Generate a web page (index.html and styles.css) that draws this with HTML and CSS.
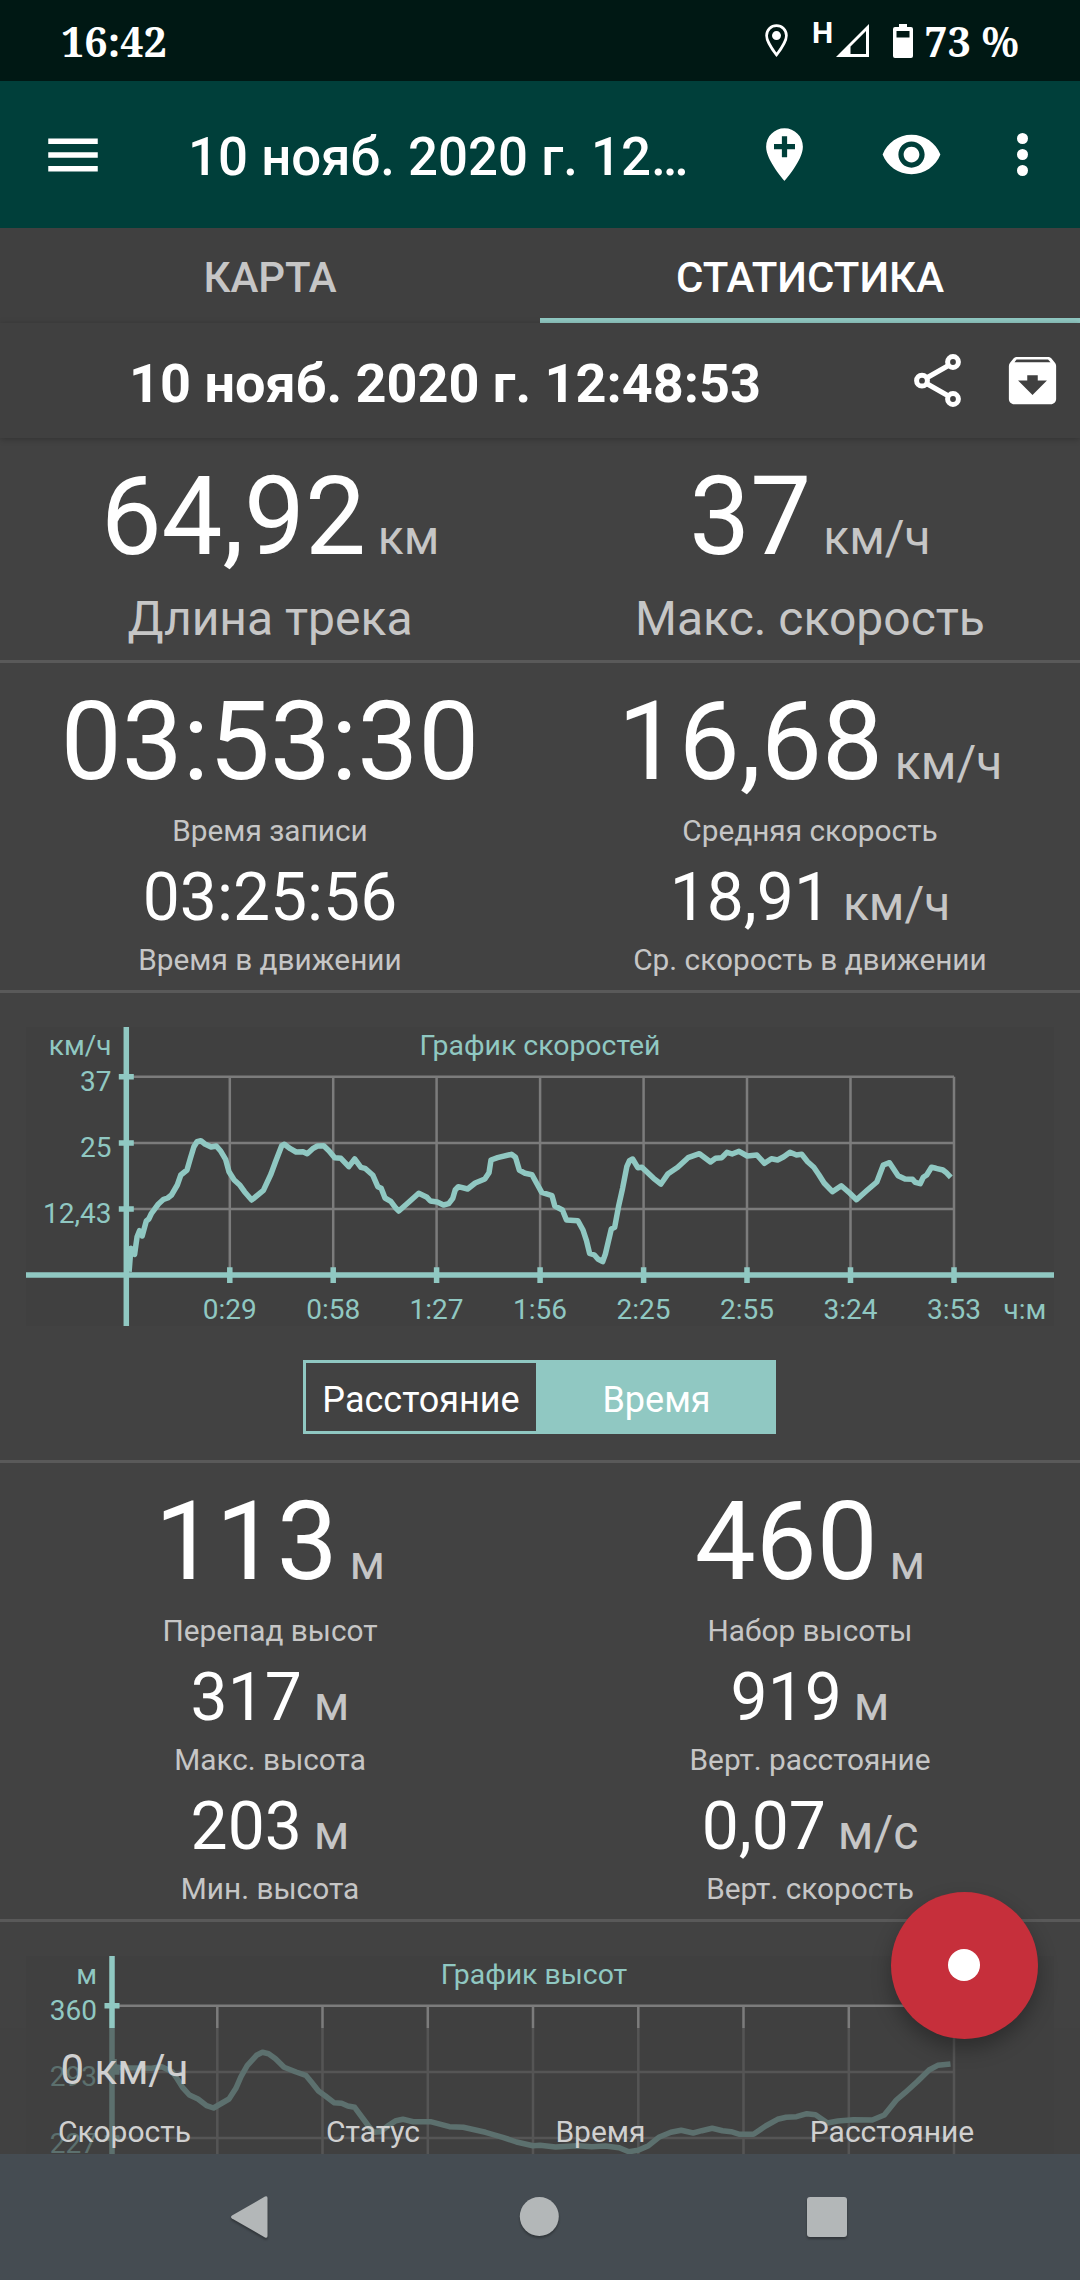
FILE: index.html
```html
<!DOCTYPE html>
<html lang="ru">
<head>
    <meta charset="UTF-8">
    <meta name="viewport" content="width=device-width, initial-scale=1.0">
    <title>Статистика трека</title>
    <link rel="stylesheet" href="styles.css">
</head>
<body>
    <div class="phone">
        <div class="statusbar">
            <span class="clock">16:42</span>
            <div class="status-icons">
                <svg class="ic-pin" viewBox="0 0 23 33"><path d="M11.5 1.6C6 1.6 1.6 6 1.6 11.5c0 7 9.900 19.300 9.900 19.300s9.900-12.300 9.900-19.300C21.400 6 17 1.600 11.500 1.600z" fill="none" stroke="#fff" stroke-width="2.700"/><circle cx="11.500" cy="11.600" r="4.500" fill="#fff"/></svg>
                <span class="net">H</span>
                <svg class="ic-signal" viewBox="0 0 33 33"><path fill-rule="evenodd" d="M33 0v33H0zM30 7L14.500 22.500V30H30z" fill="#fff"/></svg>
                <svg class="ic-battery" viewBox="0 0 20 34"><path fill-rule="evenodd" d="M6 0h8v3h4q2 0 2 2v27q0 2-2 2H2q-2 0-2-2V5q0-2 2-2h4zM3.500 7v6.500h13V7z" fill="#fff"/></svg>
                <span class="charge">73 %</span>
            </div>
        </div>

        <header class="appbar">
            <svg class="ic-menu" viewBox="0 0 24 24"><path d="M3 18h18v-2H3v2zm0-5h18v-2H3v2zm0-7v2h18V6H3z" fill="#fff"/></svg>
            <h1>10 нояб. 2020 г. 12…</h1>
            <svg class="ic-marker" viewBox="0 0 24 24"><path fill-rule="evenodd" d="M12 2C8.130 2 5 5.130 5 9c0 5.250 7 13 7 13s7-7.750 7-13c0-3.870-3.130-7-7-7zM11 5h2v3h3v2h-3v3h-2v-3H8V8h3z" fill="#fff"/></svg>
            <svg class="ic-eye" viewBox="0 0 24 24"><path d="M12 4.500C7 4.500 2.730 7.610 1 12c1.730 4.390 6 7.500 11 7.500s9.270-3.110 11-7.500c-1.730-4.390-6-7.500-11-7.500zM12 17c-2.760 0-5-2.240-5-5s2.240-5 5-5 5 2.240 5 5-2.240 5-5 5zm0-8c-1.660 0-3 1.340-3 3s1.340 3 3 3 3-1.340 3-3-1.340-3-3-3z" fill="#fff"/></svg>
            <svg class="ic-more" viewBox="0 0 11 43"><circle cx="5.500" cy="5.500" r="5.500"/><circle cx="5.500" cy="21.500" r="5.500"/><circle cx="5.500" cy="37.500" r="5.500"/></svg>
        </header>

        <nav class="tabs">
            <div class="tab">КАРТА</div>
            <div class="tab active">СТАТИСТИКА</div>
        </nav>

        <div class="track-title">
            <h2>10 нояб. 2020 г. 12:48:53</h2>
            <svg class="ic-share" viewBox="0 0 47 53"><g fill="none" stroke="#fff" stroke-width="5"><path d="M12.500 24l22-12.500M12.500 29.500l22 12.500"/><circle cx="39" cy="8" r="5.400"/><circle cx="8" cy="26.700" r="5.400"/><circle cx="39" cy="45" r="5.400"/></g></svg>
            <svg class="ic-archive" viewBox="0 0 24 24"><path d="M20.540 5.230l-1.390-1.680C18.880 3.210 18.470 3 18 3H6c-.47 0-.88.21-1.160.55L3.460 5.230C3.170 5.570 3 6.020 3 6.500V19c0 1.100.9 2 2 2h14c1.100 0 2-.9 2-2V6.500c0-.48-.17-.93-.46-1.270zM12 17.500L6.500 12H10v-2h4v2h3.500L12 17.500zM5.120 5l.81-1h12l.94 1H5.120z" fill="#fff"/></svg>
        </div>

        <main>
            <section class="stats total">
                <div class="col">
                    <div class="value">64,92<span class="unit"> км</span></div>
                    <div class="label large">Длина трека</div>
                </div>
                <div class="col">
                    <div class="value">37<span class="unit"> км/ч</span></div>
                    <div class="label large">Макс. скорость</div>
                </div>
            </section>

            <section class="stats time">
                <div class="col">
                    <div class="value">03:53:30</div>
                    <div class="label">Время записи</div>
                    <div class="value small">03:25:56</div>
                    <div class="label">Время в движении</div>
                </div>
                <div class="col">
                    <div class="value">16,68<span class="unit"> км/ч</span></div>
                    <div class="label">Средняя скорость</div>
                    <div class="value small">18,91<span class="unit"> км/ч</span></div>
                    <div class="label">Ср. скорость в движении</div>
                </div>
            </section>

            <section class="chart-block">
                <svg class="chart" viewBox="0 0 1028 299">
                    <path class="grid" d="M100 49.700H928M100 116H928M100 182H928M203.800 49.700V248M307.200 49.700V248M410.600 49.700V248M514.100 49.700V248M617.600 49.700V248M721 49.700V248M824.500 49.700V248M928 49.700V248"/>
                    <path class="axis" d="M100.300 0V299M0 248H1028"/>
                    <path class="axis" d="M92.800 49.700h15M92.800 116h15M92.800 182h15M203.800 240.300v15.700M307.200 240.300v15.700M410.600 240.300v15.700M514.100 240.300v15.700M617.600 240.300v15.700M721 240.300v15.700M824.500 240.300v15.700M928 240.300v15.700"/>
                    <polyline class="line" points="103.1,244.7 104.9,221.3 108.6,227.3 111.1,209.7 113.5,203.7 116.2,209 120.3,194 122.8,192 125.5,186.3 132.4,177 137.6,172.3 141.7,171 145.5,168 151.3,158 154.8,148 161,143 164.4,131.3 167.9,119.7 171,114.7 174.8,113.7 178.9,117 185.1,120 190.3,119 194.4,123.7 199.6,132.3 203,144.7 208.2,153 214,158.3 218.5,164.7 225.7,173 237.4,163.3 245,147 249.5,134.7 255.7,118.7 258.4,117.3 264.3,121.7 270.1,125 277,124.7 281.2,126.7 286.7,121.7 291.5,119 297.7,118.7 302.9,123.7 308.7,130.7 314.9,131.3 322.8,139.7 328.7,132 334.9,140.3 339,141.3 346.9,148.3 351.8,159.7 355.2,161.3 359,171 364.8,174.3 370,181.3 372.8,184 383.8,174.3 392.7,166.3 401,170.3 404.4,174 411.3,175 417.5,178 422.7,176.7 426.8,171.3 429.2,163 432.3,159.7 441.6,162 449.2,156 458.8,152 463,145.7 465,133 471.6,130.7 485.4,127.3 489.5,130.3 493.3,143 499.1,146.3 506,147.7 511.2,157.3 515.7,165.3 526,168.7 528.8,179 536.4,183 540.5,193 551.9,193.7 557,203 560.5,213.7 563.6,226.3 568.4,228 571.9,232 576.7,234.7 579.4,227 585.3,202 588.7,200.3 592.5,179.7 596.6,161.3 600.8,139.7 603.5,133.7 606.6,132 611.8,140.7 615.9,140.3 627.6,151.3 634.9,157 642.1,146.7 651.7,140.3 662.1,130.7 673.4,126.7 684.5,135 689.6,131.3 695.8,130.7 701,125.3 706.1,127 713,124.3 721.3,129 730.9,128 738.5,136.3 745.4,131.7 751.6,133 757.8,129.7 764,125.3 770.5,128 775.7,127.3 781.6,134.7 787.8,140.3 792.9,147.7 798.1,156 806.4,164.7 815.3,158.7 823.9,166.3 830.5,172.7 841.1,163.3 850.8,155 857.3,138 863.5,135.7 872.1,148.7 879,152 886.6,152.3 889.3,155.3 894.2,156.7 897.3,150.3 900.7,148 905.5,140.3 910,141.3 916.9,143 920.3,145.7 924.8,150.3"/>
                    <g class="mid">
                        <text class="name" x="514" y="28">График скоростей</text>
                        <text x="203.800" y="292">0:29</text>
                        <text x="307.200" y="292">0:58</text>
                        <text x="410.600" y="292">1:27</text>
                        <text x="514.100" y="292">1:56</text>
                        <text x="617.600" y="292">2:25</text>
                        <text x="721" y="292">2:55</text>
                        <text x="824.500" y="292">3:24</text>
                        <text x="928" y="292">3:53</text>
                        <text x="999" y="292">ч:м</text>
                    </g>
                    <g class="end">
                        <text x="85.500" y="28">км/ч</text>
                        <text x="85.500" y="64">37</text>
                        <text x="85.500" y="129.700">25</text>
                        <text x="85.500" y="196">12,43</text>
                    </g>
                </svg>
                <div class="toggle">
                    <button>Расстояние</button>
                    <button class="on">Время</button>
                </div>
            </section>

            <section class="stats height">
                <div class="col">
                    <div class="value">113<span class="unit"> м</span></div>
                    <div class="label">Перепад высот</div>
                    <div class="value small">317<span class="unit"> м</span></div>
                    <div class="label">Макс. высота</div>
                    <div class="value small">203<span class="unit"> м</span></div>
                    <div class="label">Мин. высота</div>
                </div>
                <div class="col">
                    <div class="value">460<span class="unit"> м</span></div>
                    <div class="label">Набор высоты</div>
                    <div class="value small">919<span class="unit"> м</span></div>
                    <div class="label">Верт. расстояние</div>
                    <div class="value small">0,07<span class="unit"> м/с</span></div>
                    <div class="label">Верт. скорость</div>
                </div>
            </section>

            <section class="chart-block last">
                <svg class="chart" viewBox="0 0 1028 299">
                    <path class="grid" d="M86 49.700H928M86 116H928M86 182H928M191.300 49.700V248M296.500 49.700V248M401.800 49.700V248M507 49.700V248M612.300 49.700V248M717.500 49.700V248M822.800 49.700V248M928 49.700V248"/>
                    <path class="axis" d="M86 0V299M0 248H1028M78.500 49.700h15M78.500 116h15M78.500 182h15"/>
                    <path class="line" d="M88 103V117M83 116l5-9"/>
                    <polyline class="line" points="88.7,110.7 94.5,111.7 125.5,112.3 135.8,110.7 146.2,115.7 151.3,123 156.5,131.3 163.4,139 172,143 180.6,149.7 187.5,152 194.4,148 203,143 209.9,132.3 215,120.7 221.2,109.7 230.5,99.3 236.4,96.3 242.6,97.7 249.5,102.7 258.1,111.3 270.1,116 279.8,119.3 285.6,126.3 292.5,135 299.4,140 308,146.7 315.6,147.3 321.8,150 328.7,151.3 337.3,163 342.5,170 347.6,176.3 354.5,175.7 363.1,169 370,164.7 376.9,163.3 387.2,165.7 404.4,165.7 423.4,170.7 437.2,171.3 459.5,176.3 476.8,181.3 490.5,186 507,189.7 514,189.3 529.5,191 551.9,189.7 565.7,190.7 579.4,190 593.2,191.7 602.8,195.7 612.1,194.3 622.5,189.7 632.8,181.3 644.9,176.3 655.2,174.3 667.2,177 675.8,174.7 686.2,172.3 696.5,174.7 705.1,175.7 713.7,178.3 727.5,178.3 739.6,170 751.6,163.3 760.2,161.3 770.5,160.7 780.9,157.7 789.5,158.7 801.5,167 811.9,165 827.4,163.7 846.3,164 858.3,159 870.4,144 879,136.7 891.1,125.7 903.1,114 911.7,109.3 924.5,108"/>
                    <g class="mid">
                        <text class="name" x="508" y="28">График высот</text>
                    </g>
                    <g class="end">
                        <text x="71" y="28">м</text>
                        <text x="71" y="64">360</text>
                        <text x="71" y="129.700">293</text>
                        <text x="71" y="196.700">227</text>
                    </g>
                </svg>
            </section>
        </main>

        <!-- live recording panel, lies over the scrolled content -->
        <div class="live">
            <div><b>0 км/ч</b>Скорость</div>
            <div><b></b>Статус</div>
            <div><b></b>Время</div>
            <div><b></b>Расстояние</div>
        </div>
        <div class="record"><span></span></div>

        <footer class="navbar">
            <svg viewBox="0 0 42 42"><path d="M4 19.500L37 0.500q2.500-1 2.500 1.500v38q0 2.500-2.500 1.500L4 22.500q-2-1.500 0-3z"/></svg>
            <svg viewBox="0 0 42 42"><circle cx="22.300" cy="20.500" r="19.500"/></svg>
            <svg viewBox="0 0 42 42"><rect x="1" y="1" width="40" height="40" rx="3"/></svg>
        </footer>
    </div>
</body>
</html>
```
FILE: styles.css
```css
* {
    box-sizing: border-box;
}

body {
    margin: 0;
    font-family: Roboto, sans-serif;
    background-color: #424242;
    color: #fff;
}

svg {
    display: block;
    flex: none;
}

.phone {
    position: relative;
    display: flex;
    flex-direction: column;
    width: 1080px;
    height: 2280px;
    overflow: hidden;
}

.statusbar {
    flex: none;
    height: 81px;
    padding: 0 61px 0 61px;
    display: flex;
    justify-content: space-between;
    align-items: center;
    background-color: #001814;
    font: bold 41.3px "Noto Serif", "Liberation Serif", serif;
}

.status-icons {
    display: flex;
    align-items: center;
}

.ic-pin {
    width: 23px;
    height: 33px;
    margin-right: 24px;
}

.net {
    font: bold 30px/20px Roboto, sans-serif;
    margin-bottom: 15px;
    margin-right: 3px;
}

.ic-signal {
    width: 33px;
    height: 33px;
    margin-right: 24px;
}

.ic-battery {
    width: 20px;
    height: 34px;
    margin-right: 11px;
}

.appbar {
    flex: none;
    height: 147px;
    display: flex;
    align-items: center;
    padding-left: 40px;
    background-color: #003f3a;
}

.ic-menu {
    width: 66px;
    height: 66px;
}

.appbar h1 {
    margin: 4px 0 0 82px;
    width: 565px;
    font-size: 52.8px;
    font-weight: 500;
    white-space: nowrap;
}

.ic-marker {
    width: 63px;
    height: 63px;
}

.ic-eye {
    width: 63px;
    height: 63px;
    margin-left: 64px;
}

.ic-more {
    width: 11px;
    height: 43px;
    margin-left: 74px;
    fill: #fff;
}

.tabs {
    flex: none;
    height: 95px;
    display: flex;
    background-color: #404040;
}

.tab {
    flex: 1;
    padding-top: 5px;
    text-align: center;
    font-size: 42px;
    font-weight: 500;
    line-height: 90px;
    color: #c6c6c6;
}

.tab.active {
    color: #fff;
    box-shadow: inset 0 -5px #90c8c2;
}

.track-title {
    position: relative;
    flex: none;
    height: 115px;
    display: flex;
    align-items: center;
    background-color: #404040;
    box-shadow: 0 1px 6px rgba(0, 0, 0, 0.25);
}

.track-title h2 {
    margin: 5px 0 0 129px;
    width: 785px;
    font-size: 54px;
    font-weight: bold;
    white-space: nowrap;
}

.ic-share {
    width: 47px;
    height: 53px;
}

.ic-archive {
    width: 63px;
    height: 63px;
    margin-left: 40px;
}

main {
    flex: 1;
    overflow: hidden;
}

.stats {
    display: grid;
    grid-template-columns: 1fr 1fr;
    padding-top: 15px;
    border-bottom: 3px solid #595959;
    text-align: center;
    white-space: nowrap;
}

.total {
    height: 225px;
}

.time {
    height: 330px;
}

.height {
    height: 459px;
}

.value {
    font-size: 108.5px;
    line-height: 128px;
}

.value.small {
    margin-top: 10px;
    font-size: 66px;
    line-height: 78px;
}

.unit {
    font-size: 48px;
    line-height: 0;
    color: #c6c6c6;
}

.label {
    margin-top: 7px;
    font-size: 29.8px;
    line-height: 36px;
    color: #c6c6c6;
}

.value.small + .label {
    margin-top: 5px;
}

.label.large {
    margin-top: 10px;
    font-size: 48px;
    line-height: 56px;
}

.chart-block {
    height: 470px;
    padding: 34px 26px 0;
    border-bottom: 3px solid #595959;
}

.chart {
    width: 1028px;
    height: 299px;
    background-color: #404040;
    font-size: 28px;
    fill: #90c8c2;
}

.chart .name {
    font-size: 28.4px;
}

.grid {
    fill: none;
    stroke: #7c7c7c;
    stroke-width: 2.5;
}

.axis {
    fill: none;
    stroke: #90c8c2;
    stroke-width: 5.5;
}

.line {
    fill: none;
    stroke: #90c8c2;
    stroke-width: 5.5;
    stroke-linejoin: round;
}

.mid {
    text-anchor: middle;
}

.end {
    text-anchor: end;
}

.toggle {
    display: flex;
    width: 473px;
    height: 74px;
    margin: 34px 0 0 277px;
    border: 3px solid #90c8c2;
}

.toggle button {
    width: 230px;
    padding: 5px 0 0;
    border: none;
    background: none;
    color: #fff;
    font: 36px Roboto, sans-serif;
}

.toggle .on {
    flex: 1;
    padding-left: 4px;
    background-color: #90c8c2;
}

.live {
    position: absolute;
    left: 0;
    right: 0;
    bottom: 126px;
    height: 126px;
    display: grid;
    grid-template-columns: 249px 248px 207px 376px;
    background-color: rgba(64, 64, 64, 0.65);
    color: #d0d0d0;
    font-size: 30px;
    line-height: 36px;
    text-align: center;
}

.live b {
    display: block;
    height: 86px;
    padding-top: 17px;
    font-size: 42px;
    line-height: 50px;
    font-weight: normal;
}

.record {
    position: absolute;
    left: 891px;
    top: 1892px;
    width: 147px;
    height: 147px;
    display: flex;
    align-items: center;
    justify-content: center;
    padding: 0 2px 1px 0;
    border-radius: 50%;
    background-color: #c62f3b;
    box-shadow: 0 10px 20px rgba(0, 0, 0, 0.3);
}

.record span {
    width: 32px;
    height: 32px;
    border-radius: 50%;
    background-color: #fff;
}

.navbar {
    flex: none;
    height: 126px;
    display: flex;
    justify-content: space-between;
    align-items: center;
    padding: 0 232px 0 228px;
    background-color: #454c52;
}

.navbar svg {
    width: 42px;
    height: 42px;
    fill: #b3b7b8;
    filter: drop-shadow(0 2px 1px rgba(0, 0, 0, 0.3));
}
```
